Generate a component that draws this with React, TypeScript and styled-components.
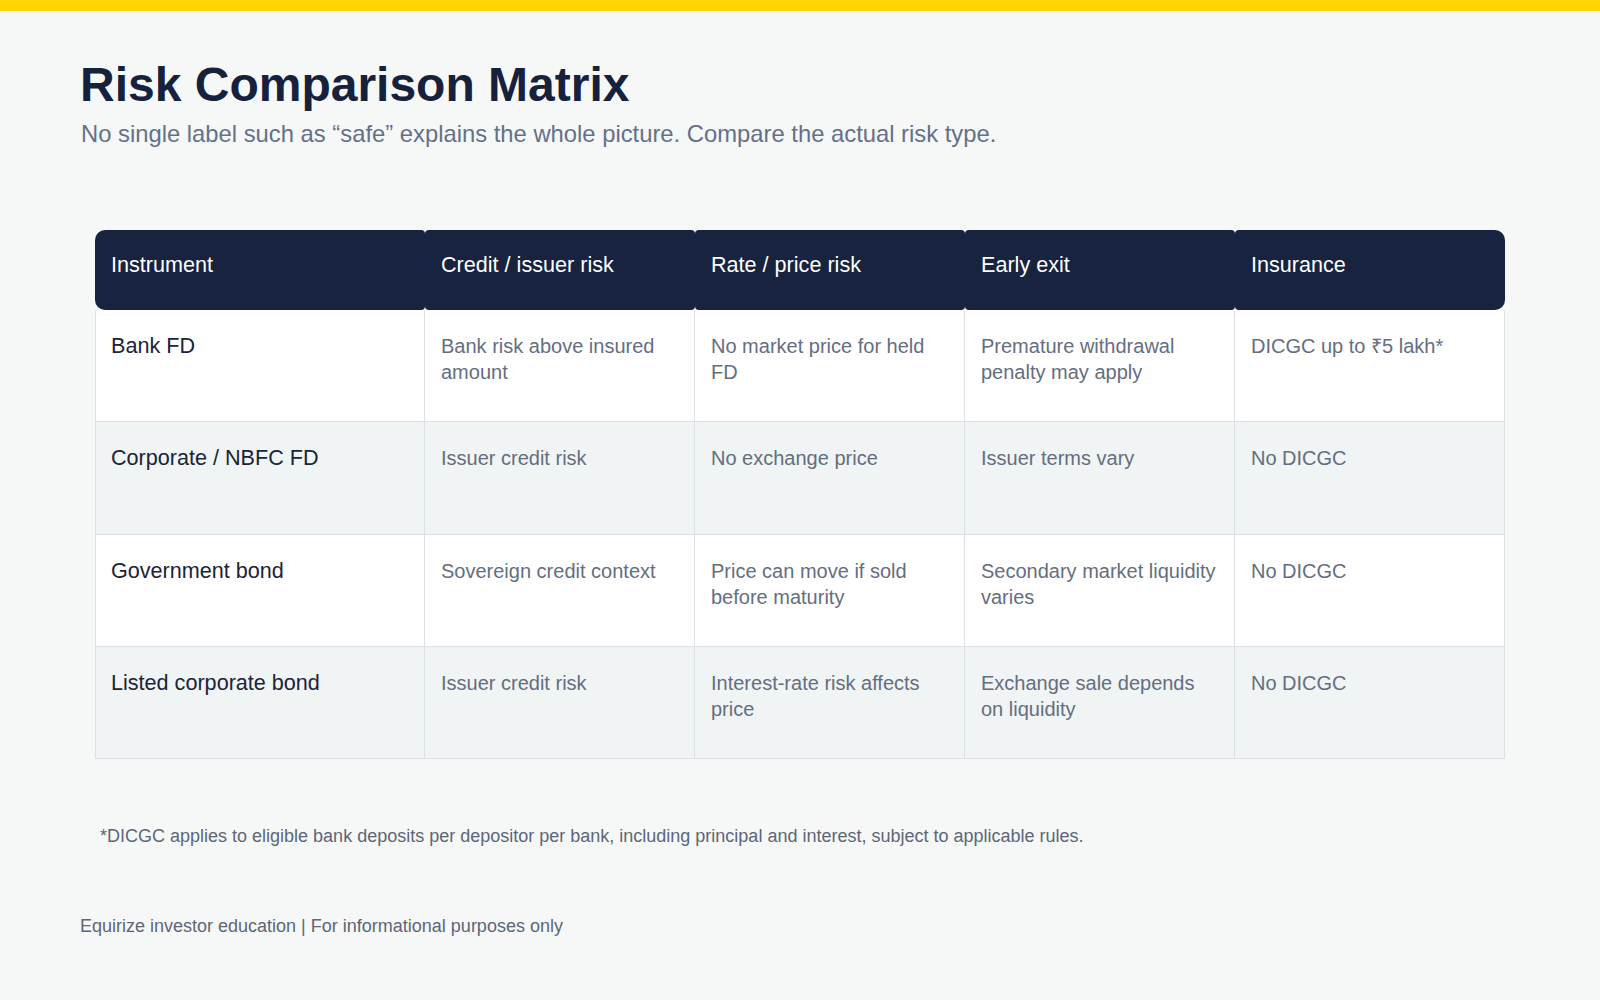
import React from "react";
import styled, { createGlobalStyle } from "styled-components";

interface Row {
  instrument: string;
  credit: string;
  rate: string;
  exit: string;
  insurance: string;
}

const headers = [
  "Instrument",
  "Credit / issuer risk",
  "Rate / price risk",
  "Early exit",
  "Insurance",
];

const rows: Row[] = [
  {
    instrument: "Bank FD",
    credit: "Bank risk above insured amount",
    rate: "No market price for held FD",
    exit: "Premature withdrawal penalty may apply",
    insurance: "DICGC up to ₹5 lakh*",
  },
  {
    instrument: "Corporate / NBFC FD",
    credit: "Issuer credit risk",
    rate: "No exchange price",
    exit: "Issuer terms vary",
    insurance: "No DICGC",
  },
  {
    instrument: "Government bond",
    credit: "Sovereign credit context",
    rate: "Price can move if sold before maturity",
    exit: "Secondary market liquidity varies",
    insurance: "No DICGC",
  },
  {
    instrument: "Listed corporate bond",
    credit: "Issuer credit risk",
    rate: "Interest-rate risk affects price",
    exit: "Exchange sale depends on liquidity",
    insurance: "No DICGC",
  },
];

export default function App() {
  return (
    <>
      <GlobalStyle />
      <Page>
        <TopBar />
        <Content>
          <Title>Risk Comparison Matrix</Title>
          <Subtitle>
            No single label such as “safe” explains the whole picture. Compare
            the actual risk type.
          </Subtitle>

          <Matrix>
            {headers.map((h, i) => (
              <HeadCell key={h} $first={i === 0} $last={i === headers.length - 1}>
                {h}
              </HeadCell>
            ))}
            {rows.map((row, r) => {
              const cells = [row.credit, row.rate, row.exit, row.insurance];
              return (
                <React.Fragment key={row.instrument}>
                  <BodyCell $alt={r % 2 === 1} $first>
                    <InstrumentName>{row.instrument}</InstrumentName>
                  </BodyCell>
                  {cells.map((c, i) => (
                    <BodyCell key={i} $alt={r % 2 === 1}>
                      {c}
                    </BodyCell>
                  ))}
                </React.Fragment>
              );
            })}
          </Matrix>

          <Footnote>
            *DICGC applies to eligible bank deposits per depositor per bank,
            including principal and interest, subject to applicable rules.
          </Footnote>

          <Footer>Equirize investor education | For informational purposes only</Footer>
        </Content>
      </Page>
    </>
  );
}

const GlobalStyle = createGlobalStyle`
  body {
    margin: 0;
    background: #f6f8f7;
    font-family: "Liberation Sans", Arial, sans-serif;
  }
`;

const Page = styled.div`
  min-height: 1000px;
  background: #f6f8f7;
`;

const TopBar = styled.div`
  height: 11px;
  background: #ffd600;
`;

const Content = styled.div`
  padding: 45px 80px 0;
  display: flex;
  flex-direction: column;
`;

const Title = styled.h1`
  margin: 0;
  font-size: 48px;
  line-height: 1.2;
  font-weight: 700;
  color: #16223d;
`;

const Subtitle = styled.p`
  margin: 3px 0 0 1px;
  font-size: 23.8px;
  line-height: 1.4;
  color: #64708a;
`;

const Matrix = styled.div`
  margin: 80px 15px 0;
  display: grid;
  grid-template-columns: 330px repeat(4, 1fr);
  grid-template-rows: 80px repeat(4, 112.3px);
`;

const HeadCell = styled.div<{ $first?: boolean; $last?: boolean }>`
  background: #17233f;
  color: #ffffff;
  font-size: 21.6px;
  line-height: 1.3;
  padding: 21px 16px 0;
  border-radius: ${(p) =>
    p.$first ? "10px 4px 4px 10px" : p.$last ? "4px 10px 10px 4px" : "4px"};
`;

const BodyCell = styled.div<{ $alt?: boolean; $first?: boolean }>`
  background: ${(p) => (p.$alt ? "#f0f4f4" : "#ffffff")};
  border-right: 1px solid #dbe0e5;
  border-bottom: 1px solid #dbe0e5;
  border-left: ${(p) => (p.$first ? "1px solid #dbe0e5" : "none")};
  padding: 23px 16px 0;
  font-size: 20px;
  line-height: 1.3;
  color: #646e7f;
`;

const InstrumentName = styled.span`
  display: block;
  margin-top: -1px;
  margin-left: -1px;
  font-size: 21.6px;
  line-height: 1.3;
  color: #1b2438;
`;

const Footnote = styled.p`
  margin: 65px 0 0 20px;
  font-size: 18px;
  line-height: 1.4;
  color: #5c6678;
`;

const Footer = styled.p`
  margin: 65px 0 0;
  font-size: 18px;
  line-height: 1.4;
  color: #5c6678;
`;
